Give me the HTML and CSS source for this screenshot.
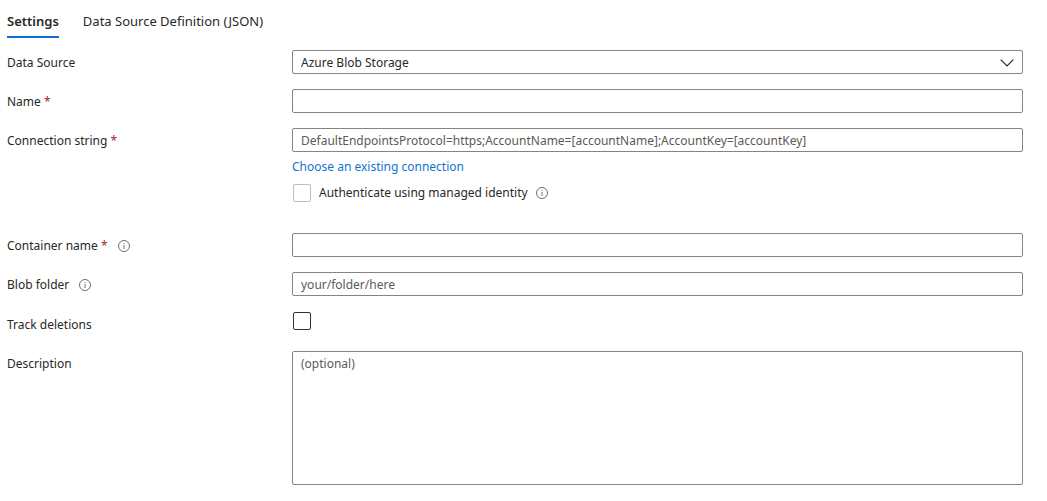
FILE: index.html
```html
<!DOCTYPE html>
<html lang="en">
<head>
<meta charset="utf-8">
<meta name="viewport" content="width=device-width, initial-scale=1">
<title>Data Source Settings</title>
<link rel="stylesheet" href="styles.css">
</head>
<body>
<svg class="sprite" aria-hidden="true">
  <symbol id="info" viewBox="0 0 12 12">
    <circle cx="6" cy="6" r="5.5" fill="none" stroke="currentColor" stroke-width="0.9"/>
    <path d="M6 5v4M6 3v1" fill="none" stroke="currentColor" stroke-width="0.9"/>
  </symbol>
</svg>
<nav class="tabs" role="tablist">
  <button class="tab tab-active" type="button" role="tab" aria-selected="true">Settings</button>
  <button class="tab" type="button" role="tab" aria-selected="false">Data Source Definition (JSON)</button>
</nav>
<form class="form">
  <div class="row">
    <div class="label"><label for="source">Data Source</label></div>
    <div class="select-wrap">
      <select class="field select" id="source"><option>Azure Blob Storage</option></select>
      <svg class="chevron" viewBox="0 0 14 8" aria-hidden="true"><path d="M0.7 0.7L7 7L13.3 0.7" fill="none" stroke="currentColor" stroke-width="1.2"/></svg>
    </div>
  </div>
  <div class="row">
    <div class="label"><label for="name">Name <span class="required">*</span></label></div>
    <input class="field" id="name" type="text">
  </div>
  <div class="row row-connection">
    <div class="label"><label for="connection">Connection string <span class="required">*</span></label></div>
    <div class="stack">
      <input class="field" id="connection" type="text" placeholder="DefaultEndpointsProtocol=https;AccountName=[accountName];AccountKey=[accountKey]">
      <a class="link" href="#">Choose an existing connection</a>
      <div class="check-row">
        <input class="check check-light" id="identity" type="checkbox">
        <label for="identity">Authenticate using managed identity</label>
        <svg class="info" aria-hidden="true"><use href="#info"/></svg>
      </div>
    </div>
  </div>
  <div class="row">
    <div class="label"><label for="container">Container name <span class="required">*</span></label><svg class="info" aria-hidden="true"><use href="#info"/></svg></div>
    <input class="field" id="container" type="text">
  </div>
  <div class="row">
    <div class="label"><label for="folder">Blob folder</label><svg class="info" aria-hidden="true"><use href="#info"/></svg></div>
    <input class="field" id="folder" type="text" placeholder="your/folder/here">
  </div>
  <div class="row">
    <div class="label label-track"><label for="track">Track deletions</label></div>
    <input class="check" id="track" type="checkbox">
  </div>
  <div class="row">
    <div class="label"><label for="description">Description</label></div>
    <textarea class="field area" id="description" placeholder="(optional)"></textarea>
  </div>
</form>
</body>
</html>
```
FILE: styles.css
```css
* {
  box-sizing: border-box;
}

body {
  margin: 0;
  padding: 11px 24px 16px 7px;
  background: #fff;
  color: #292827;
  font: 12px/20px "Segoe UI", "Noto Sans", sans-serif;
}

.sprite {
  position: absolute;
  width: 0;
  height: 0;
}

.tabs {
  display: flex;
  gap: 24px;
  margin-bottom: 12px;
}

.tab {
  height: 27px;
  padding: 0 0 5px;
  border: 0;
  border-bottom: 2px solid transparent;
  background: none;
  color: inherit;
  font: inherit;
  font-size: 13px;
}

.tab-active {
  border-color: #0f6fd1;
  font-weight: 600;
}

.form {
  display: grid;
  gap: 15px;
}

.row {
  display: grid;
  grid-template-columns: 285px 1fr;
  align-items: start;
}

.row-connection {
  padding-bottom: 15px;
}

.label {
  display: flex;
  align-items: center;
  gap: 10px;
  height: 24px;
  padding-top: 2px;
}

.label-track {
  height: 25px;
}

.required {
  color: #a4262c;
}

.field {
  display: block;
  width: 100%;
  height: 24px;
  padding: 0 8px;
  border: 1px solid #868482;
  border-radius: 2px;
  background: #fff;
  color: inherit;
  font: inherit;
  outline: 0;
  appearance: none;
}

.field::placeholder {
  color: #5c5a58;
  opacity: 1;
}

.select {
  padding-top: 2px;
}

.area {
  height: 134px;
  padding-top: 2px;
  resize: none;
}

.select-wrap {
  position: relative;
}

.chevron {
  position: absolute;
  top: 9px;
  right: 9px;
  width: 14px;
  height: 8px;
  pointer-events: none;
}

.stack {
  display: flex;
  flex-direction: column;
  align-items: flex-start;
}

.link {
  margin-top: 5px;
  color: #0f73d3;
  text-decoration: none;
}

.check-row {
  display: flex;
  align-items: center;
  margin-top: 6px;
  gap: 8px;
}

.check {
  width: 18px;
  height: 18px;
  margin: 1px;
  border: 1px solid #323130;
  border-radius: 2px;
  background: #fff;
  appearance: none;
}

.check-light {
  margin: 0 0 0 1px;
  border-color: #c0bebc;
}

.info {
  width: 12px;
  height: 12px;
  color: #605e5c;
}
```
